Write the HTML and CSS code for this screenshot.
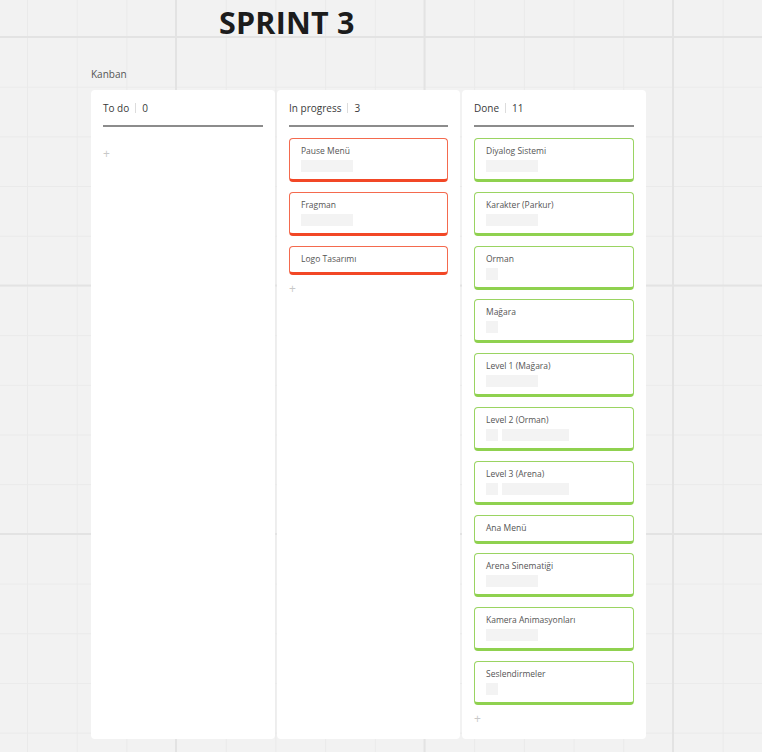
FILE: index.html
```html
<!DOCTYPE html>
<html lang="tr">
<head>
<meta charset="utf-8">
<title>Sprint 3</title>
<link rel="stylesheet" href="styles.css">
</head>
<body>
<div class="canvas">
  <h1 class="title">SPRINT 3</h1>
  <div class="board-label">Kanban</div>
  <div class="board">
    <section class="column col-wide">
      <header class="col-head"><span class="col-name">To do</span><span class="sep"></span><span class="count">0</span></header>
      <div class="cards"></div>
      <div class="add add-empty">+</div>
    </section>
    <section class="column col-mid">
      <header class="col-head"><span class="col-name">In progress</span><span class="sep"></span><span class="count">3</span></header>
      <div class="cards">
        <div class="card red"><div class="card-title">Pause Menü</div><div class="ph-row"><span class="ph ph-md"></span></div></div>
        <div class="card red"><div class="card-title">Fragman</div><div class="ph-row"><span class="ph ph-md"></span></div></div>
        <div class="card red"><div class="card-title">Logo Tasarımı</div></div>
      </div>
      <div class="add">+</div>
    </section>
    <section class="column col-wide">
      <header class="col-head"><span class="col-name">Done</span><span class="sep"></span><span class="count">11</span></header>
      <div class="cards">
        <div class="card green"><div class="card-title">Diyalog Sistemi</div><div class="ph-row"><span class="ph ph-md"></span></div></div>
        <div class="card green"><div class="card-title">Karakter (Parkur)</div><div class="ph-row"><span class="ph ph-md"></span></div></div>
        <div class="card green"><div class="card-title">Orman</div><div class="ph-row"><span class="ph ph-sm"></span></div></div>
        <div class="card green"><div class="card-title">Mağara</div><div class="ph-row"><span class="ph ph-sm"></span></div></div>
        <div class="card green"><div class="card-title">Level 1 (Mağara)</div><div class="ph-row"><span class="ph ph-md"></span></div></div>
        <div class="card green"><div class="card-title">Level 2 (Orman)</div><div class="ph-row"><span class="ph ph-sm"></span><span class="ph ph-lg"></span></div></div>
        <div class="card green"><div class="card-title">Level 3 (Arena)</div><div class="ph-row"><span class="ph ph-sm"></span><span class="ph ph-lg"></span></div></div>
        <div class="card green"><div class="card-title">Ana Menü</div></div>
        <div class="card green"><div class="card-title">Arena Sinematiği</div><div class="ph-row"><span class="ph ph-md"></span></div></div>
        <div class="card green"><div class="card-title">Kamera Animasyonları</div><div class="ph-row"><span class="ph ph-md"></span></div></div>
        <div class="card green"><div class="card-title">Seslendirmeler</div><div class="ph-row"><span class="ph ph-sm"></span></div></div>
      </div>
      <div class="add">+</div>
    </section>
  </div>
</div>
</body>
</html>
```

FILE: styles.css
```css
html, body {
  margin: 0;
  padding: 0;
  height: 100%;
}
body {
  font-family: "Open Sans", "Liberation Sans", sans-serif;
  color: #333;
  background-color: #f2f2f2;
  background-image:
    linear-gradient(to right, #e3e3e3 2px, transparent 2px),
    linear-gradient(to bottom, #e3e3e3 2px, transparent 2px),
    linear-gradient(to right, #eaeaea 1px, transparent 1px),
    linear-gradient(to bottom, #eaeaea 1px, transparent 1px);
  background-size: 248.5px 248.5px, 248.5px 248.5px, 49.7px 49.7px, 49.7px 49.7px;
  background-position: 175px 36px, 175px 36px, 27px 37px, 27px 37px;
  overflow: hidden;
}
.canvas {
  padding: 0 0 0 91px;
}
.title {
  margin: 0 0 0 128px;
  padding-top: 2px;
  font-size: 30.5px;
  line-height: 40px;
  font-weight: 700;
  color: #1c1c1c;
  letter-spacing: 0.2px;
}
.board-label {
  margin-top: 25px;
  font-size: 10px;
  line-height: 14px;
  color: #555;
}
.board {
  margin-top: 9px;
  display: flex;
  gap: 2px;
  height: 649px;
}
.column {
  background: #fff;
  border-radius: 4px;
  padding: 0 12px;
  box-sizing: border-box;
  display: flex;
  flex-direction: column;
}
.col-wide { width: 184px; }
.col-mid { width: 183px; }
.col-head {
  height: 37px;
  border-bottom: 2px solid #8c8c8c;
  display: flex;
  align-items: center;
  padding-top: 1px;
  box-sizing: border-box;
  font-size: 10px;
  color: #3a3a3a;
}
.sep {
  width: 1px;
  height: 10px;
  background: #dcdcdc;
  margin: 0 6px;
}
.cards {
  display: flex;
  flex-direction: column;
  gap: 9.8px;
  margin-top: 11px;
}
.card {
  border: 1px solid;
  border-bottom-width: 3px;
  border-radius: 4px;
  padding: 5px 10px 7px 11px;
  background: #fff;
}
.card.red { border-color: #f46a4e; border-bottom-color: #f24726; }
.card.green { border-color: #9ad462; border-bottom-color: #8fd14f; }
.card-title {
  font-size: 8.5px;
  line-height: 13px;
  color: #555;
}
.ph-row {
  display: flex;
  gap: 4px;
  margin: 3px 0 0;
}
.ph {
  display: block;
  height: 12px;
  background: #f3f3f3;
}
.ph-sm { width: 12px; }
.ph-md { width: 52px; }
.ph-lg { width: 67px; }
.add {
  color: #c8c8c8;
  font-size: 12px;
  line-height: 12px;
  margin-top: 8px;
}
.add.add-empty { margin-top: 10px; }
```
